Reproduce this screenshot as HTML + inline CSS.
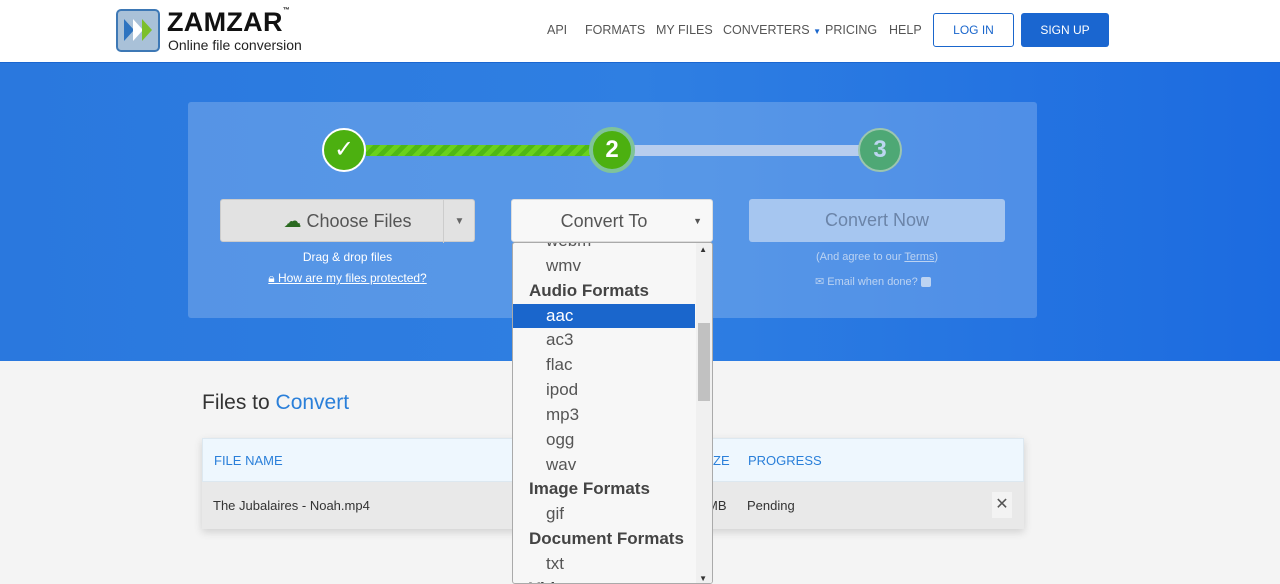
<!DOCTYPE html>
<html><head><meta charset="utf-8"><style>
*{box-sizing:border-box;margin:0;padding:0}
body{width:1280px;height:584px;overflow:hidden;background:#f4f4f4;font-family:"Liberation Sans",sans-serif;position:relative}
.abs{position:absolute}
header{position:absolute;left:0;top:0;width:1280px;height:63px;background:#fff;border-bottom:1px solid #1a66d0}
.nav{position:absolute;top:23px;font-size:12.5px;color:#555}
.band{position:absolute;left:0;top:63px;width:1280px;height:298px;background:linear-gradient(90deg,#2a78de,#2f7fe2 50%,#1c6be0);}
.panel{position:absolute;left:188px;top:102px;width:849px;height:216px;background:rgba(255,255,255,0.2);border-radius:3px}
.circ{position:absolute;width:44px;height:44px;border-radius:50%;color:#fff;font-size:24px;font-weight:bold;text-align:center;line-height:40px}
.btn{position:absolute;height:43px;border-radius:3px;font-size:18px;text-align:center;line-height:43px}
.dd{position:absolute;left:512px;top:242px;width:201px;height:342px;background:#f7f7f7;border:1px solid #aaa;border-radius:3px;overflow:hidden}
.dd div{height:24.85px;line-height:24px;font-size:17px;color:#555;padding-left:33px}
.dd .g{font-weight:bold;padding-left:16px;color:#444}
.dd .s{background:#1a66cc;color:#fff;margin-right:17px}
</style></head><body>
<header>
<svg class="abs" style="left:116px;top:9px" width="45" height="44"><rect x="1" y="1" width="42" height="41" rx="4" fill="#a9c1d8" stroke="#3d78b5" stroke-width="2"/><path d="M8 10l10 11-10 11z" fill="#2e74c0"/><path d="M17 10l10 11-10 11z" fill="#fff"/><path d="M26 10l10 11-10 11z" fill="#7cbf2c"/></svg>
<div class="abs" style="left:167px;top:7px;font-size:27px;font-weight:bold;color:#111;letter-spacing:0.3px">ZAMZAR<span style="font-size:7px;vertical-align:top">™</span></div>
<div class="abs" style="left:168px;top:37px;font-size:14px;color:#222">Online file conversion</div>
<div class="nav" style="left:547px">API</div>
<div class="nav" style="left:585px">FORMATS</div>
<div class="nav" style="left:656px">MY FILES</div>
<div class="nav" style="left:723px">CONVERTERS <span style="font-size:8px;color:#1a66cc">▼</span></div>
<div class="nav" style="left:825px">PRICING</div>
<div class="nav" style="left:889px">HELP</div>
<div class="abs" style="left:933px;top:13px;width:81px;height:34px;border:1px solid #1a66cc;border-radius:3px;color:#1a66cc;font-size:12px;text-align:center;line-height:32px">LOG IN</div>
<div class="abs" style="left:1021px;top:13px;width:88px;height:34px;background:#1a66d0;border-radius:3px;color:#fff;font-size:12px;text-align:center;line-height:34px">SIGN UP</div>
</header>
<div class="band"></div>
<div class="panel"></div>
<div class="abs" style="left:366px;top:145px;width:226px;height:11px;background:repeating-linear-gradient(135deg,#6ad11c 0 5px,#4fb814 5px 10px)"></div>
<div class="abs" style="left:632px;top:145px;width:240px;height:11px;background:#b7cdee"></div>
<div class="circ" style="left:322px;top:128px;background:#4cb010;border:2px solid #fff;font-weight:normal">✓</div>
<div class="circ" style="left:589px;top:127px;width:46px;height:46px;background:#4cb010;border:4px solid #7fc39a;line-height:38px">2</div>
<div class="circ" style="left:858px;top:128px;background:#4ea875;border:2px solid #9cc6ae;color:#bcd6f0">3</div>
<div class="btn" style="left:220px;top:199px;width:255px;background:#e2e2e2;color:#555;border:1px solid #ccc"><span style="color:#2a6a20">☁</span> Choose Files<span style="position:absolute;left:222px;top:0;width:32px;border-left:1px solid #ccc;font-size:10px;color:#666">▼</span></div>
<div class="abs" style="left:220px;top:250px;width:255px;text-align:center;color:#fff;font-size:12px">Drag &amp; drop files</div>
<div class="abs" style="left:220px;top:271px;width:255px;text-align:center;color:#fff;font-size:12px;text-decoration:underline">🔒︎ How are my files protected?</div>
<div class="btn" style="left:511px;top:199px;width:202px;background:#f8f8f8;color:#555;border:1px solid #ddd;padding-right:16px">Convert To<span style="position:absolute;right:10px;font-size:9px;color:#555">▼</span></div>
<div class="btn" style="left:749px;top:199px;width:256px;background:#a6c6f0;color:#6b84a8">Convert Now</div>
<div class="abs" style="left:749px;top:251px;width:256px;text-align:center;color:#bcd3f2;font-size:11px">(And agree to our <u>Terms</u>)</div>
<div class="abs" style="left:815px;top:275px;color:#bcd3f2;font-size:11px">✉ Email when done? <span style="display:inline-block;width:10px;height:10px;background:#bcd3f2;vertical-align:middle;border-radius:2px"></span></div>
<div class="abs" style="left:202px;top:391px;font-size:21px;color:#333">Files to <span style="color:#2a7fd9">Convert</span></div>
<div class="abs" style="left:202px;top:438px;width:822px;height:91px;box-shadow:0 3px 8px rgba(0,0,0,0.15)">
<div style="height:44px;background:#eef7fe;border:1px solid #dde8f0;color:#2a7fd9;font-size:13px;line-height:44px;padding-left:11px;position:relative">FILE NAME<span style="position:absolute;left:545px">PROGRESS</span><span style="position:absolute;left:510px">ZE</span></div>
<div style="height:47px;background:#e9e9e9;font-size:13px;line-height:47px;padding-left:11px;color:#333;position:relative">The Jubalaires - Noah.mp4<span style="position:absolute;left:545px">Pending</span><span style="position:absolute;left:505px">MB</span><span style="position:absolute;left:790px;top:10px;width:20px;height:26px;background:#f3f3f3;line-height:26px;text-align:center;font-size:16px;color:#555">✕</span></div>
</div>
<div class="dd">
<div style="margin-top:-14px">webm</div><div>wmv</div><div class="g">Audio Formats</div><div class="s">aac</div><div>ac3</div><div>flac</div><div>ipod</div><div>mp3</div><div>ogg</div><div>wav</div><div class="g">Image Formats</div><div>gif</div><div class="g">Document Formats</div><div>txt</div><div class="g">Video presets</div>
<span class="abs" style="right:0;top:0;width:16px;height:342px;background:#f0f0f0"></span>
<span class="abs" style="right:2px;top:80px;width:12px;height:78px;background:#c1c1c1"></span>
<span class="abs" style="right:5px;top:2px;font-size:8px;color:#333">▲</span>
<span class="abs" style="right:5px;bottom:0;font-size:8px;color:#333">▼</span>
</div>
</body></html>
